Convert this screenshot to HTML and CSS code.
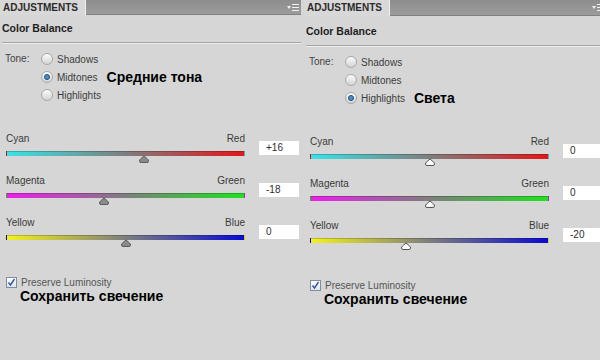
FILE: index.html
```html
<!DOCTYPE html>
<html lang="ru">
  <head>
    <meta charset="UTF-8" />
    <meta name="viewport" content="width=device-width, initial-scale=1.0" />
    <title>Color Balance</title>
    <link rel="stylesheet" href="styles.css">
  </head>
  <body>
    <div class="panels">
      <!-- Midtones -->
      <section class="panel">
        <div class="tabbar">
          <div class="tab">ADJUSTMENTS</div>
          <div class="tabbar-fill">
            <svg class="menu-icon" width="12" height="7" viewBox="0 0 12 7">
              <path d="M0 2 L4 2 L2 5 Z" fill="#f2f2f2" />
              <rect x="5" y="0" width="7" height="1" fill="#f2f2f2" />
              <rect x="5" y="3" width="7" height="1" fill="#f2f2f2" />
              <rect x="5" y="6" width="7" height="1" fill="#f2f2f2" />
            </svg>
          </div>
        </div>
        <div class="panel-body">
          <div class="title">Color Balance</div>
          <div class="tone">
            <span class="tone-label">Tone:</span>
            <div class="radios">
              <div class="radio"><span class="radio-dot"></span>Shadows</div>
              <div class="radio checked"><span class="radio-dot"></span>Midtones<span class="note note-tone">Средние тона</span></div>
              <div class="radio"><span class="radio-dot"></span>Highlights</div>
            </div>
          </div>

          <div class="sliders">
            <div class="slider-row">
              <div class="slider">
                <div class="slider-labels"><span>Cyan</span><span>Red</span></div>
                <div class="track track-cr">
                  <svg class="thumb" style="left: 58%" width="10" height="8" viewBox="0 0 10 8"><path d="M2 7.5 Q0.5 7.5 0.5 6 Q0.5 5 1.5 4 L5 1 L8.5 4 Q9.5 5 9.5 6 Q9.5 7.5 8 7.5 Z" /></svg>
                </div>
              </div>
              <div class="value">+16</div>
            </div>
            <div class="slider-row">
              <div class="slider">
                <div class="slider-labels"><span>Magenta</span><span>Green</span></div>
                <div class="track track-mg">
                  <svg class="thumb" style="left: 41%" width="10" height="8" viewBox="0 0 10 8"><path d="M2 7.5 Q0.5 7.5 0.5 6 Q0.5 5 1.5 4 L5 1 L8.5 4 Q9.5 5 9.5 6 Q9.5 7.5 8 7.5 Z" /></svg>
                </div>
              </div>
              <div class="value">-18</div>
            </div>
            <div class="slider-row">
              <div class="slider">
                <div class="slider-labels"><span>Yellow</span><span>Blue</span></div>
                <div class="track track-yb">
                  <svg class="thumb" style="left: 50%" width="10" height="8" viewBox="0 0 10 8"><path d="M2 7.5 Q0.5 7.5 0.5 6 Q0.5 5 1.5 4 L5 1 L8.5 4 Q9.5 5 9.5 6 Q9.5 7.5 8 7.5 Z" /></svg>
                </div>
              </div>
              <div class="value">0</div>
            </div>
          </div>

          <div class="preserve">
            <span class="checkbox">
              <svg width="9" height="9" viewBox="0 0 9 9"><path d="M1.5 4.5 L3.5 7 L7.5 1" fill="none" stroke="#2f56a0" stroke-width="1.4" /></svg>
            </span>
            Preserve Luminosity
          </div>
          <div class="note note-preserve">Сохранить свечение</div>
        </div>
      </section>

      <!-- Highlights -->
      <section class="panel panel-right">
        <div class="tabbar">
          <div class="tab">ADJUSTMENTS</div>
          <div class="tabbar-fill">
            <svg class="menu-icon" width="12" height="7" viewBox="0 0 12 7">
              <path d="M0 2 L4 2 L2 5 Z" fill="#f2f2f2" />
              <rect x="5" y="0" width="7" height="1" fill="#f2f2f2" />
              <rect x="5" y="3" width="7" height="1" fill="#f2f2f2" />
              <rect x="5" y="6" width="7" height="1" fill="#f2f2f2" />
            </svg>
          </div>
        </div>
        <div class="panel-body">
          <div class="title">Color Balance</div>
          <div class="tone">
            <span class="tone-label">Tone:</span>
            <div class="radios">
              <div class="radio"><span class="radio-dot"></span>Shadows</div>
              <div class="radio"><span class="radio-dot"></span>Midtones</div>
              <div class="radio checked"><span class="radio-dot"></span>Highlights<span class="note note-tone">Света</span></div>
            </div>
          </div>

          <div class="sliders">
            <div class="slider-row">
              <div class="slider">
                <div class="slider-labels"><span>Cyan</span><span>Red</span></div>
                <div class="track track-cr">
                  <svg class="thumb" style="left: 50%" width="10" height="8" viewBox="0 0 10 8"><path d="M2 7.5 Q0.5 7.5 0.5 6 Q0.5 5 1.5 4 L5 1 L8.5 4 Q9.5 5 9.5 6 Q9.5 7.5 8 7.5 Z" /></svg>
                </div>
              </div>
              <div class="value">0</div>
            </div>
            <div class="slider-row">
              <div class="slider">
                <div class="slider-labels"><span>Magenta</span><span>Green</span></div>
                <div class="track track-mg">
                  <svg class="thumb" style="left: 50%" width="10" height="8" viewBox="0 0 10 8"><path d="M2 7.5 Q0.5 7.5 0.5 6 Q0.5 5 1.5 4 L5 1 L8.5 4 Q9.5 5 9.5 6 Q9.5 7.5 8 7.5 Z" /></svg>
                </div>
              </div>
              <div class="value">0</div>
            </div>
            <div class="slider-row">
              <div class="slider">
                <div class="slider-labels"><span>Yellow</span><span>Blue</span></div>
                <div class="track track-yb">
                  <svg class="thumb" style="left: 40%" width="10" height="8" viewBox="0 0 10 8"><path d="M2 7.5 Q0.5 7.5 0.5 6 Q0.5 5 1.5 4 L5 1 L8.5 4 Q9.5 5 9.5 6 Q9.5 7.5 8 7.5 Z" /></svg>
                </div>
              </div>
              <div class="value">-20</div>
            </div>
          </div>

          <div class="preserve">
            <span class="checkbox">
              <svg width="9" height="9" viewBox="0 0 9 9"><path d="M1.5 4.5 L3.5 7 L7.5 1" fill="none" stroke="#2f56a0" stroke-width="1.4" /></svg>
            </span>
            Preserve Luminosity
          </div>
          <div class="note note-preserve">Сохранить свечение</div>
        </div>
      </section>
    </div>
  </body>
</html>
```

FILE: styles.css
```css
body {
  margin: 0;
  overflow: hidden;
  background-color: #d6d6d6;
  font-family: "Liberation Sans", Arial, sans-serif;
  font-size: 10px;
  color: #3a3a3a;
}
.panels {
  display: flex;
  width: 606px;
  height: 360px;
}
.panel {
  width: 301px;
  flex: none;
}
.panel-right {
  width: 302px;
  margin-left: 3px;
}
.tabbar {
  display: flex;
  height: 15px;
}
.tab {
  padding: 0 7px 0 3px;
  line-height: 15px;
  font-weight: bold;
  font-size: 10px;
  color: #2b2b2b;
  background-color: #d8d8d8;
  border-right: 1px solid #efefef;
}
.tabbar-fill {
  flex: 1;
  display: flex;
  justify-content: flex-end;
  align-items: center;
  padding-right: 2px;
  background-image: linear-gradient(#8d8d8d, #9c9c9c);
  border-bottom: 1px solid #808080;
  box-sizing: border-box;
}
.panel-right .tabbar {
  height: 16px;
}
.panel-right .tab {
  line-height: 16px;
}
.panel-body {
  padding: 0 0 0 6px;
}
.panel-right .panel-body {
  padding: 2px 0 0 6px;
}
.title {
  height: 28px;
  box-sizing: border-box;
  padding: 7px 0 0 0;
  margin-left: -4px;
  font-weight: bold;
  font-size: 10.5px;
  color: #1e1e1e;
  border-bottom: 1px solid #a6a6a6;
  box-shadow: 0 1px 0 #ececec;
}
.tone {
  display: flex;
  padding-top: 7px;
}
.tone-label {
  width: 36px;
  line-height: 18px;
  color: #444;
  margin-left: -1px;
}
.radios {
  display: flex;
  flex-direction: column;
}
.radio {
  display: flex;
  align-items: center;
  height: 18px;
  color: #3c3c3c;
}
.radio-dot {
  width: 10px;
  height: 10px;
  margin-right: 4px;
  border-radius: 50%;
  border: 1px solid #a8a8a8;
  background-image: linear-gradient(#fbfbfb, #d4d4d4);
  display: flex;
  align-items: center;
  justify-content: center;
}
.checked .radio-dot::after {
  content: "";
  width: 6px;
  height: 6px;
  border-radius: 50%;
  background-color: #4a8fc6;
  border: 1px solid #1f4f78;
  box-sizing: border-box;
}
.note {
  font-family: "Liberation Sans", Arial, sans-serif;
  font-weight: bold;
  font-size: 14px;
  color: #000;
}
.note-tone {
  margin-left: 9px;
}
.sliders {
  display: flex;
  flex-direction: column;
  gap: 19px;
  padding-top: 29px;
}
.slider-row {
  display: grid;
  grid-template-columns: 239px 40px;
  column-gap: 14px;
  align-items: end;
}
.slider-labels {
  display: flex;
  justify-content: space-between;
  height: 12px;
  line-height: 12px;
  margin-bottom: 6px;
  color: #3a3a3a;
}
.track {
  position: relative;
  height: 5px;
  box-sizing: border-box;
  border-top: 1px solid rgba(0, 0, 0, 0.2);
  border-left: 1px solid rgba(0, 0, 0, 0.15);
  border-right: 1px solid rgba(0, 0, 0, 0.15);
}
.track-cr {
  background-image: linear-gradient(to right, #3ae2e6, #7e7e7e 50%, #e2161a);
}
.track-mg {
  background-image: linear-gradient(to right, #ec1eec, #7e7e7e 50%, #1ee21e);
}
.track-yb {
  background-image: linear-gradient(to right, #f2f21e, #7e7e7e 50%, #0a0ad2);
}
.thumb {
  position: absolute;
  top: 3px;
  transform: translateX(-50%);
  fill: #8a8a8a;
  stroke: #5c5c5c;
  stroke-width: 1;
  stroke-linejoin: round;
}
.panel-right .thumb {
  fill: #ffffff;
  stroke: #555555;
}
.value {
  height: 14px;
  line-height: 14px;
  margin-bottom: 1px;
  padding-left: 7px;
  background-color: #ffffff;
  color: #2e2e2e;
}
.preserve {
  display: flex;
  align-items: center;
  gap: 4px;
  margin-top: 37px;
  height: 11px;
  color: #555;
}
.checkbox {
  width: 9px;
  height: 9px;
  border: 1px solid #7f8ea3;
  background-image: linear-gradient(#ffffff, #dfe4ec);
  display: flex;
}
.note-preserve {
  margin-left: 14px;
  line-height: 16px;
}
```
